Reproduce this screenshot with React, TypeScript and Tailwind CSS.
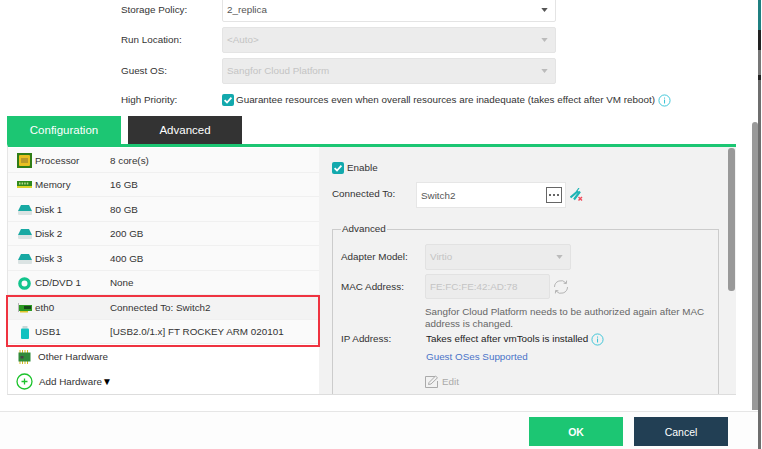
import React from "react";

const font = { fontFamily: '"Liberation Sans", Arial, sans-serif' };

function Check({ size = 12 }: { size?: number }) {
  return (
    <span className="flex shrink-0 items-center justify-center rounded-[2px] bg-[#13a9ad]" style={{ width: size, height: size }}>
      <svg viewBox="0 0 12 12" className="h-full w-full">
        <path d="M2.6 6.2 5 8.5 9.4 3.6" fill="none" stroke="#fff" strokeWidth="1.8" />
      </svg>
    </span>
  );
}

function Info() {
  return (
    <svg viewBox="0 0 14 14" className="h-[13px] w-[13px] shrink-0">
      <circle cx="7" cy="7" r="6" fill="none" stroke="#35c3d6" strokeWidth="1" />
      <rect x="6.5" y="6" width="1.1" height="4.2" fill="#35c3d6" />
      <rect x="6.5" y="3.8" width="1.1" height="1.2" fill="#35c3d6" />
    </svg>
  );
}

function Caret({ color = "#bbb" }: { color?: string }) {
  return (
    <svg viewBox="0 0 8 5" className="h-[4px] w-[7px]">
      <path d="M0 0h8L4 5z" fill={color} />
    </svg>
  );
}

function Cpu() {
  return (
    <svg viewBox="0 0 15 15" className="h-[15px] w-[15px]">
      <rect width="15" height="15" fill="#2f7d17" />
      <rect x="2" y="2" width="11" height="11" rx="1" fill="#e8c020" />
      <rect x="4" y="5" width="7" height="5" fill="#b89a28" />
    </svg>
  );
}

function Ram() {
  return (
    <svg viewBox="0 0 15 8" className="h-[8px] w-[15px]">
      <rect width="15" height="5" fill="#2f8a1c" />
      <rect y="5" width="15" height="2" fill="#d9d22a" />
      <path d="M2 1.5h1.5v2H2zM4.6 1.5h1.5v2H4.6zM7.2 1.5h1.5v2H7.2zM9.8 1.5h1.5v2H9.8z" fill="#b9d98a" />
    </svg>
  );
}

function Disk() {
  return (
    <svg viewBox="0 0 14 10" className="h-[10px] w-[14px]">
      <path d="M3 0h8l3 6H0z" fill="#18a9a3" />
      <path d="M0 6h14v3a1 1 0 0 1-1 1H1a1 1 0 0 1-1-1z" fill="#dbe3e3" />
    </svg>
  );
}

function Cd() {
  return (
    <svg viewBox="0 0 14 14" className="h-[13px] w-[13px]">
      <circle cx="7" cy="7" r="5" fill="none" stroke="#12c48c" strokeWidth="3.6" />
    </svg>
  );
}

function Nic() {
  return (
    <svg viewBox="0 0 14 10" className="h-[10px] w-[14px]">
      <path d="M0.5 0v9" stroke="#b5b5b5" strokeWidth="1" />
      <rect x="1" y="2" width="13" height="6" fill="#2c9a22" />
      <rect x="6" y="3" width="7" height="3" fill="#17481a" />
      <rect x="2" y="8" width="8" height="1.5" fill="#e0c52a" />
    </svg>
  );
}

function Usb() {
  return (
    <svg viewBox="0 0 8 13" className="h-[13px] w-[8px]">
      <rect x="1.5" y="0" width="5" height="2.5" fill="#c9d7d7" />
      <rect x="0" y="2.5" width="8" height="10.5" rx="1" fill="#12c2c0" />
    </svg>
  );
}

function Chip() {
  return (
    <svg viewBox="0 0 13 14" className="h-[14px] w-[13px]">
      <path d="M2 0v14M4.5 0v14M7 0v14M9.5 0v14" stroke="#d4b81f" strokeWidth="1" />
      <rect x="0.5" y="2.5" width="12" height="9" fill="#2f8a3a" />
      <rect x="2.5" y="6" width="3" height="2.5" fill="#444" />
    </svg>
  );
}

function Plus() {
  return (
    <svg viewBox="0 0 17 17" className="h-[17px] w-[17px]">
      <circle cx="8.5" cy="8.5" r="7.5" fill="none" stroke="#1cc32c" strokeWidth="1.3" />
      <path d="M5.5 8.5h6M8.5 5.5v6" stroke="#1cc32c" strokeWidth="1.3" />
    </svg>
  );
}

function Unlink() {
  return (
    <svg viewBox="0 0 13 14" className="h-[14px] w-[13px]">
      <path d="M0.5 9.5 8 3M4 11.5 10 3.5" stroke="#1fb5b5" strokeWidth="2.2" fill="none" />
      <path d="M9 0 6.5 3.5" stroke="#1fb5b5" strokeWidth="1.2" />
      <path d="M8.5 9l3.5 3.5M12 9l-3.5 3.5" stroke="#ef4a5a" strokeWidth="1.4" />
    </svg>
  );
}

function Refresh() {
  return (
    <svg viewBox="0 0 16 16" className="h-[16px] w-[16px]">
      <path d="M1.5 8A6.5 6.5 0 0 1 13 4M14.5 8A6.5 6.5 0 0 1 3 12" fill="none" stroke="#b5b5b5" strokeWidth="1" />
      <path d="M13.6 1.6 13.4 4.6 10.6 4.2M2.4 14.4 2.6 11.4 5.4 11.8" fill="none" stroke="#b5b5b5" strokeWidth="1" />
    </svg>
  );
}

function EditIcon() {
  return (
    <svg viewBox="0 0 14 13" className="h-[13px] w-[14px]">
      <path d="M10 1.5H.5v11h12V6" fill="none" stroke="#aaa" strokeWidth="1" />
      <path d="M3.5 9.5 4 7.5 10.5 1l2 1.8L6 9z" fill="none" stroke="#aaa" strokeWidth="1" />
    </svg>
  );
}

function FormRow({ label, children, h = "h-[26px]" }: { label: string; children: React.ReactNode; h?: string }) {
  return (
    <div className={`flex shrink-0 items-center ${h}`}>
      <div className="w-[101px] shrink-0 text-[#333]">{label}</div>
      {children}
    </div>
  );
}

function SelectBox({ text, disabled }: { text: string; disabled?: boolean }) {
  return (
    <div
      className={`flex h-full w-[334px] items-center justify-between rounded-[2px] border border-[#e4e4e4] pl-[4px] pr-[7px] ${
        disabled ? "bg-[#ececec] text-[#c4c4c4]" : "bg-white text-[#555]"
      }`}
    >
      <span>{text}</span>
      <Caret color={disabled ? "#bbb" : "#555"} />
    </div>
  );
}

const rows: [React.ReactNode, string, string, string][] = [
  [<Cpu />, "Processor", "8 core(s)", "#fafafa"],
  [<Ram />, "Memory", "16 GB", "#fafafa"],
  [<Disk />, "Disk 1", "80 GB", "#fafafa"],
  [<Disk />, "Disk 2", "200 GB", "#fafafa"],
  [<Disk />, "Disk 3", "400 GB", "#fafafa"],
  [<Cd />, "CD/DVD 1", "None", "#fafafa"],
  [<Nic />, "eth0", "Connected To: Switch2", "#f3f3f3"],
  [<Usb />, "USB1", "[USB2.0/1.x] FT ROCKEY ARM 020101", "#fafafa"],
];

export default function App() {
  return (
    <div className="relative flex h-[449px] w-[762px] flex-col overflow-hidden bg-white text-[9.85px] leading-[12px] text-[#333]" style={font}>
      {/* Form */}
      <div className="ml-[121px] mt-[-3px] flex shrink-0 flex-col gap-[5px]">
        <FormRow label="Storage Policy:" h="h-[25px]"><SelectBox text="2_replica" /></FormRow>
        <FormRow label="Run Location:"><SelectBox text="<Auto>" disabled /></FormRow>
        <FormRow label="Guest OS:"><SelectBox text="Sangfor Cloud Platform" disabled /></FormRow>
        <FormRow label="High Priority:" h="h-[12px] mt-[5px]">
          <div className="flex items-center gap-[2px]">
            <Check />
            <span className="whitespace-nowrap">Guarantee resources even when overall resources are inadequate (takes effect after VM reboot)</span>
            <span className="ml-[1px]"><Info /></span>
          </div>
        </FormRow>
      </div>

      {/* Tabs */}
      <div className="ml-[7px] mt-[10px] flex shrink-0 gap-[7px] text-[11.5px]">
        <div className="flex h-[28px] w-[114px] items-center justify-center bg-[#1cc673] text-white">Configuration</div>
        <div className="flex h-[28px] w-[114px] items-center justify-center bg-[#333] text-white">Advanced</div>
      </div>

      {/* Panel */}
      <div className="ml-[7px] flex h-[251px] w-[729px] shrink-0 overflow-hidden border-t-[3px] border-b border-l border-t-[#1cc673] border-b-[#ddd] border-l-[#e6e6e6]">
        {/* Hardware list */}
        <div className="flex w-[311px] shrink-0 flex-col pt-[1px]">
          {rows.map(([icon, name, value, bg]) => (
            <div key={name} className="flex h-[24.5px] shrink-0 items-center border-b border-[#f0f0f0] pt-[2px]" style={{ background: bg }}>
              <div className="ml-[9px] mr-[3px] flex w-[15px] shrink-0 justify-center">{icon}</div>
              <div className="w-[75px] shrink-0 text-[#333]">{name}</div>
              <div className="whitespace-nowrap text-[#333]">{value}</div>
            </div>
          ))}
          <div className="flex h-[25px] shrink-0 items-center">
            <div className="ml-[9px] mr-[7px] flex w-[14px] shrink-0 justify-center"><Chip /></div>
            <span>Other Hardware</span>
          </div>
          <div className="flex h-[25px] shrink-0 items-center">
            <div className="ml-[8px] mr-[6px] flex w-[17px] shrink-0 justify-center"><Plus /></div>
            <span>Add Hardware</span>
            <span className="text-[10px] text-black">▼</span>
          </div>
        </div>

        {/* Details */}
        <div className="relative min-w-0 flex-1 overflow-hidden bg-[#f2f2f2] pl-[13px] pr-[17px]">
          <div className="mt-[15px] flex h-[12px] items-center gap-[3px]">
            <Check />
            <span>Enable</span>
          </div>
          <div className="mt-[8px] flex h-[26px] items-center">
            <div className="w-[84px] shrink-0 pb-[2px]">Connected To:</div>
            <div className="flex h-full w-[150px] items-center justify-between border border-[#e6e6e6] bg-white pl-[4px] pr-[3px] text-[#555]">
              <span className="pt-[1px]">Switch2</span>
              <span className="flex h-[16px] w-[16px] items-center justify-center gap-[2px] border border-[#666]">
                <i className="h-[2px] w-[2px] rounded-full bg-[#333]" />
                <i className="h-[2px] w-[2px] rounded-full bg-[#333]" />
                <i className="h-[2px] w-[2px] rounded-full bg-[#333]" />
              </span>
            </div>
            <span className="ml-[4px]"><Unlink /></span>
          </div>

          <fieldset className="mt-[15px] h-[200px] border border-[#ccc] pl-[8px]">
            <legend className="px-[1px] leading-[12px]">Advanced</legend>
            <div className="mt-[9px] flex h-[26px] items-center">
              <div className="w-[84px] shrink-0">Adapter Model:</div>
              <div className="flex h-full w-[146px] items-center justify-between rounded-[2px] border border-[#e2e2e2] bg-[#ececec] pl-[4px] pr-[7px] text-[#c4c4c4]">
                <span>Virtio</span>
                <Caret />
              </div>
            </div>
            <div className="mt-[4px] flex h-[25px] items-center">
              <div className="w-[84px] shrink-0">MAC Address:</div>
              <div className="flex h-full w-[125px] items-center rounded-[2px] border border-[#e2e2e2] bg-[#ececec] pl-[4px] text-[#c4c4c4]">FE:FC:FE:42:AD:78</div>
              <span className="ml-[3px]"><Refresh /></span>
            </div>
            <div className="ml-[84px] mt-[7px] w-[290px] text-[#666]">Sangfor Cloud Platform needs to be authorized again after MAC address is changed.</div>
            <div className="mt-[2px] flex h-[14px] items-center">
              <div className="w-[85px] shrink-0">IP Address:</div>
              <span className="text-[#222]">Takes effect after vmTools is installed</span>
              <span className="ml-[3px]"><Info /></span>
            </div>
            <div className="ml-[85px] mt-[5px] text-[#4a72c8]">Guest OSes Supported</div>
            <div className="ml-[84px] mt-[12px] flex items-center gap-[3px] text-[#aaa]">
              <EditIcon />
              <span>Edit</span>
            </div>
          </fieldset>

          <div className="absolute right-[1px] top-[1px] h-[143px] w-[7px] rounded-[3px] bg-[#999]" />
        </div>
      </div>

      {/* Footer */}
      <div className="mt-[16px] flex h-[38px] w-[758px] shrink-0 items-start justify-end gap-[11px] border-t border-[#e6e6e6] bg-[#fdfdfd] pr-[30px] pt-[5px] text-[10.5px]">
        <button className="flex h-[29px] w-[94px] items-center justify-center bg-[#1cc673] font-bold text-white">OK</button>
        <button className="flex h-[29px] w-[94px] items-center justify-center bg-[#223f54] text-white">Cancel</button>
      </div>

      {/* Red annotation */}
      <div className="pointer-events-none absolute left-[6px] top-[295px] h-[52px] w-[314px] border-2 border-[#ef3340]" />

      {/* Outer scrollbar */}
      <div className="absolute left-[752px] top-[122px] h-[288px] w-[6px] rounded-t-[3px] bg-[#999]" />
      <div className="absolute left-[758px] top-0 flex h-[449px] w-[3px] flex-col bg-[#6e6e6e]">
        <div className="h-[30px] bg-[#1f7f80]" />
        <div className="h-[20px] bg-[#222]" />
        <div className="h-[25px] bg-[#777]" />
        <div className="h-[5px] bg-[#222]" />
      </div>
    </div>
  );
}
